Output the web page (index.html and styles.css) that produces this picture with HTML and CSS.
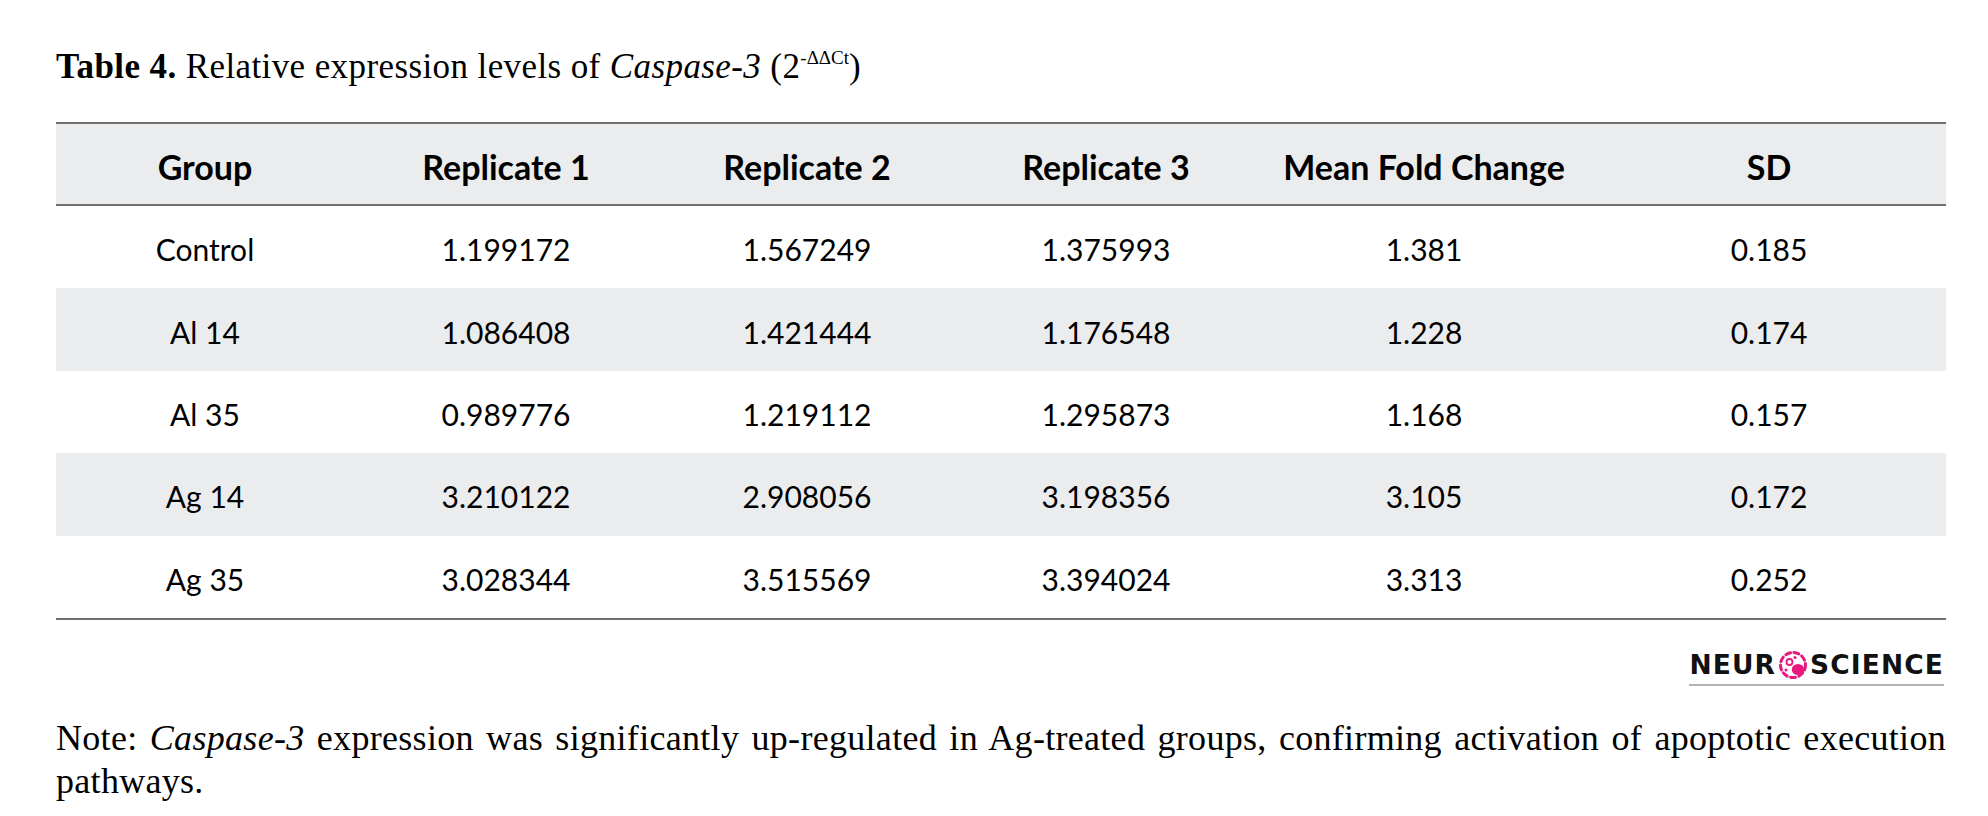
FILE: index.html
```html
<!DOCTYPE html>
<html lang="en">
<head>
<meta charset="utf-8">
<title>Table 4</title>
<link rel="stylesheet" href="styles.css">
</head>
<body>
<div class="page">
  <p class="caption"><b>Table 4.</b> Relative expression levels of <i>Caspase-3</i> (2<sup>-ΔΔCt</sup>)</p>
  <table class="data">
    <colgroup>
      <col class="c1"><col class="c2"><col class="c3"><col class="c4"><col class="c5"><col class="c6">
    </colgroup>
    <thead>
      <tr><th>Group</th><th>Replicate 1</th><th>Replicate 2</th><th>Replicate 3</th><th>Mean Fold Change</th><th>SD</th></tr>
    </thead>
    <tbody>
      <tr><td>Control</td><td>1.199172</td><td>1.567249</td><td>1.375993</td><td>1.381</td><td>0.185</td></tr>
      <tr class="alt"><td>Al 14</td><td>1.086408</td><td>1.421444</td><td>1.176548</td><td>1.228</td><td>0.174</td></tr>
      <tr><td>Al 35</td><td>0.989776</td><td>1.219112</td><td>1.295873</td><td>1.168</td><td>0.157</td></tr>
      <tr class="alt"><td>Ag 14</td><td>3.210122</td><td>2.908056</td><td>3.198356</td><td>3.105</td><td>0.172</td></tr>
      <tr class="last"><td>Ag 35</td><td>3.028344</td><td>3.515569</td><td>3.394024</td><td>3.313</td><td>0.252</td></tr>
    </tbody>
  </table>
  <div class="logo-row">
    <div class="logo">
      <span class="logo-word">NEUR</span><svg class="logo-icon" viewBox="0 0 30 30" width="30" height="30" aria-hidden="true">
        <circle cx="15" cy="15" r="12.5" fill="none" stroke="#e8187f" stroke-width="3" stroke-dasharray="5 3.5" stroke-linecap="round"/>
        <circle cx="11.5" cy="12" r="3" fill="none" stroke="#e8187f" stroke-width="1.8"/>
        <ellipse cx="20" cy="19.5" rx="6.2" ry="5.6" fill="#e8187f"/>
        <circle cx="17" cy="7.5" r="1.6" fill="#e8187f"/>
        <circle cx="8" cy="20" r="1.5" fill="#e8187f"/>
      </svg><span class="logo-word">SCIENCE</span>
    </div>
  </div>
  <p class="note">Note: <i>Caspase-3</i> expression was significantly up-regulated in Ag-treated groups, confirming activation of apoptotic execution pathways.</p>
</div>
</body>
</html>
```

FILE: styles.css
```css
html, body {
  margin: 0;
  padding: 0;
  background: #ffffff;
}

.page {
  padding: 0 42px 0 56px;
  color: #000000;
}

.caption {
  margin: 47px 0 0 0;
  font-family: "Liberation Serif", "Times New Roman", serif;
  font-size: 35px;
  line-height: 40px;
  letter-spacing: 0.4px;
}

.caption b {
  font-weight: bold;
}

.caption sup {
  font-size: 19px;
  vertical-align: 14px;
  line-height: 0;
  letter-spacing: 0;
}

.data {
  margin-top: 35px;
  width: 1890px;
  table-layout: fixed;
  border-collapse: separate;
  border-spacing: 0;
  font-family: Lato, "Open Sans", sans-serif;
}

.c1 { width: 298px; }
.c2 { width: 304px; }
.c3 { width: 298px; }
.c4 { width: 300px; }
.c5 { width: 336px; }
.c6 { width: 354px; }

.data th,
.data td {
  box-sizing: border-box;
  padding: 4px 0 0 0;
  text-align: center;
  vertical-align: middle;
}

.data th {
  height: 84px;
  background: #ebecee;
  border-top: 2px solid #6f6f6f;
  border-bottom: 2px solid #6f6f6f;
  font-size: 34px;
  font-weight: 700;
}

.data td {
  height: 82.4px;
  font-size: 30px;
  font-weight: 400;
}

.data tr.alt td {
  background: #ebecee;
}

.data tr.last td {
  height: 84.4px;
  border-bottom: 2px solid #6f6f6f;
}

.logo-row {
  display: flex;
  justify-content: flex-end;
  margin-top: 31px;
  padding-right: 2px;
}

.logo {
  display: flex;
  align-items: center;
  height: 28px;
  padding-bottom: 5px;
  border-bottom: 2px solid #b3b3b3;
  font-family: "DejaVu Sans", sans-serif;
  font-weight: bold;
  font-size: 26.5px;
  line-height: 28px;
  letter-spacing: 1.1px;
  color: #111111;
}

.logo-icon {
  display: block;
  margin: 0 2px 0 2px;
}

.note {
  margin: 31px 0 0 0;
  font-family: "Liberation Serif", "Times New Roman", serif;
  font-size: 36px;
  line-height: 43px;
  letter-spacing: 0.3px;
  text-align: justify;
}
```
